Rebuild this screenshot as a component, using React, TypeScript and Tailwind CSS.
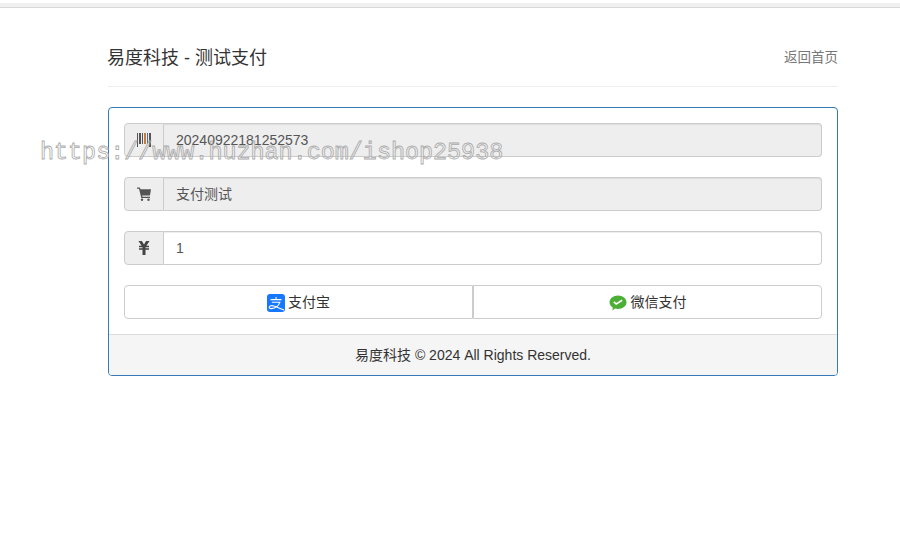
import React from 'react';

const BarcodeIcon = () => (
  <svg width="16" height="14" viewBox="0 0 16 14">
    <rect x="1" y="0" width="1" height="14" fill="#555" />
    <rect x="3" y="0" width="2" height="11" fill="#555" />
    <rect x="6" y="0" width="1" height="11" fill="#555" />
    <rect x="8" y="0" width="2" height="11" fill="#c0803a" />
    <rect x="11" y="0" width="1" height="11" fill="#4a6fa5" />
    <rect x="13" y="0" width="2" height="14" fill="#555" />
  </svg>
);

const CartIcon = () => (
  <svg width="14" height="14" viewBox="0 0 14 14" fill="#555">
    <path d="M0 0.500h2.800l.7 1.700H14l-1 6.300H5.200l.3 1.200h7.500v1.300H4.300L2 1.800H0z" />
    <circle cx="5" cy="12.700" r="1.200" />
    <circle cx="11.500" cy="12.700" r="1.200" />
  </svg>
);

const YenIcon = () => (
  <svg width="12" height="14" viewBox="0 0 12 14" fill="#444">
    <path d="M0.500 0h3.400L6 3.400 8.100 0h3.400L8.400 4.700h2.600v1.500H7.500v1h3.500v1.500H7.500V14h-3V8.700H1V7.200h3.500v-1H1V4.700h2.600z" />
  </svg>
);

const AlipayIcon = () => (
  <svg width="18" height="18" viewBox="0 0 18 18" className="mt-[2px]">
    <rect width="18" height="18" rx="3" fill="#1677ff" />
    <path d="M3.500 5.600h11M9 3v2.600M4.800 8.300h8c-1.100 3.300-4.300 5.700-8.600 6.300-1.500.2-2.300-.8-1.900-1.700.5-1.100 2.500-1.500 4.500-.9 2.500.7 5.500 2.300 10.200 4" stroke="#fff" strokeWidth="1.100" fill="none" />
  </svg>
);

const WechatPayIcon = () => (
  <svg width="18" height="16" viewBox="0 0 18 16" className="mt-[2px]">
    <path d="M9 0.500c4.700 0 8.500 3 8.500 6.800S13.700 14 9 14c-1 0-2-.1-2.900-.4L3.400 15.500l.4-2.900C1.800 11.300.5 9.400.5 7.300.5 3.500 4.300.5 9 .5z" fill="#4caf35" />
    <path d="M4.800 6.800l2.400 2.200 6-3.800" stroke="#fff" strokeWidth="1.600" fill="none" />
  </svg>
);

const InputRow = ({ icon, value, readOnly, className }: { icon: React.ReactNode; value: string; readOnly?: boolean; className?: string }) => (
  <div className={`flex h-[34px] ${className ?? ''}`}>
    <span className="flex w-[40px] shrink-0 items-center justify-center rounded-l border border-[#ccc] bg-[#eee]">{icon}</span>
    <div
      className={`flex flex-1 items-center rounded-r border border-l-0 border-[#ccc] px-3 text-sm text-[#555] shadow-[inset_0_1px_1px_rgba(0,0,0,0.075)] ${
        readOnly ? 'bg-[#eee]' : 'bg-white'
      }`}
    >
      {value}
    </div>
  </div>
);

export default function App() {
  return (
    <div className="relative min-h-[551px] bg-white font-['Liberation_Sans','Noto_Sans_CJK_SC',sans-serif] text-sm text-[#333]">
      <div className="h-[8px] pt-[3px]">
        <div className="h-[5px] border-b border-[#d8d8d8] bg-[#f0f0f0]"></div>
      </div>

      <div className="ml-[108px] w-[730px]">
        <div className="flex h-[79px] items-end justify-between border-b border-[#eee] pb-[18px]">
          <h1 className="-ml-px text-lg leading-[20px] font-normal">易度科技 - 测试支付</h1>
          <a href="#" className="text-[13.500px] leading-[20px] text-[#777]">
            返回首页
          </a>
        </div>

        <div className="mt-[20px] overflow-hidden rounded border border-[#337ab7] bg-white">
          <div className="p-[15px]">
            <InputRow icon={<BarcodeIcon />} value="20240922181252573" readOnly />
            <InputRow icon={<CartIcon />} value="支付测试" readOnly className="mt-[20px]" />
            <InputRow icon={<YenIcon />} value="1" className="mt-[20px]" />
            <div className="mt-[20px] flex h-[34px]">
              <button className="flex flex-1 items-center justify-center gap-[3px] rounded-l border border-[#ccc] bg-white">
                <AlipayIcon />
                支付宝
              </button>
              <button className="flex flex-1 items-center justify-center gap-[4px] rounded-r border border-[#ccc] bg-white">
                <WechatPayIcon />
                微信支付
              </button>
            </div>
          </div>
          <div className="flex h-[41px] items-center justify-center border-t border-[#ddd] bg-[#f5f5f5]">易度科技 © 2024 All Rights Reserved.</div>
        </div>
      </div>

      <div className="pointer-events-none absolute top-[137px] left-[40px] font-['Liberation_Mono',monospace] text-[23.400px] leading-[32px] whitespace-nowrap text-transparent [-webkit-text-stroke:0.800px_#aaa]">
        https://www.huzhan.com/ishop25938
      </div>
    </div>
  );
}
